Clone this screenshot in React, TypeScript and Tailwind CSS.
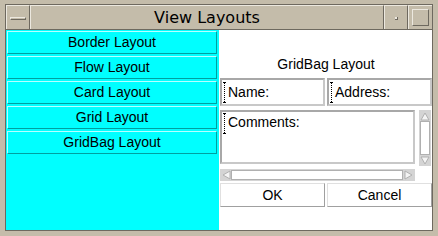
import React from 'react'

const sans = { fontFamily: '"Liberation Sans", Arial, sans-serif' }

function Cursor() {
  return (
    <span className="inline-flex flex-col items-center w-[3px] h-[21px] mr-[2px]">
      <span className="w-[3px] h-px bg-black" />
      <span className="flex-1 border-l border-dotted border-black" />
      <span className="w-[3px] h-px bg-black" />
    </span>
  )
}

function Field({ label }: { label: string }) {
  return (
    <div className="flex-1 h-[28px] border-2 border-t-[#a8a8a8] border-l-[#a8a8a8] border-b-[#c8c8c8] border-r-[#c8c8c8] flex items-center pl-px">
      <Cursor />
      <span className="text-[14px] leading-none text-black">{label}</span>
    </div>
  )
}

function Arrow({ dir }: { dir: 'up' | 'down' | 'left' | 'right' }) {
  const pts = {
    up: '1,9 5,2 9,9',
    down: '1,1 5,8 9,1',
    left: '9,1 2,5 9,9',
    right: '1,1 8,5 1,9',
  }[dir]
  return (
    <svg width="10" height="10" viewBox="0 0 10 10">
      <polygon points={pts} fill="#f4f4f4" stroke="#b0b0b0" strokeWidth="1" />
    </svg>
  )
}

const LAYOUTS = ['Border Layout', 'Flow Layout', 'Card Layout', 'Grid Layout', 'GridBag Layout']

export default function App() {
  return (
    <div className="w-[438px] h-[236px] bg-[#c4bcaa] pt-[4px] px-[5px] pb-[5px]" style={sans}>
      <div className="h-full flex flex-col border border-t-[#6e695f] border-l-[#6e695f] border-r-[#6e695f] border-b-[#6e695f]">
        {/* Title bar */}
        <div className="h-[25px] flex border-b border-[#6e695f]">
          <div className="w-[24px] border-t border-l border-[#ece8df] border-r-[#6e695f] border-r flex items-center justify-center">
            <div className="w-[16px] h-[3px] border-t border-l border-[#ece8df] border-b border-r border-b-[#6e695f] border-r-[#6e695f] mt-px" />
          </div>
          <div
            className="flex-1 border-t border-l border-[#ece8df] border-r border-r-[#6e695f] flex items-center justify-center text-[16px] text-black"
            style={{ fontFamily: '"DejaVu Sans", sans-serif' }}
          >
            View Layouts
          </div>
          <div className="w-[24px] border-t border-l border-[#ece8df] border-r border-r-[#6e695f] flex items-center justify-center">
            <div className="w-[3px] h-[3px] bg-[#ece8df] border-b border-r border-[#6e695f] mt-px" />
          </div>
          <div className="w-[24px] border-t border-l border-[#ece8df] flex items-center justify-center">
            <div className="w-[17px] h-[17px] border border-t-[#ece8df] border-l-[#ece8df] border-b-[#6e695f] border-r-[#6e695f]" />
          </div>
        </div>

        {/* Content */}
        <div className="flex-1 flex">
          <div className="w-[213px] bg-[#00ffff] pl-px pr-[2px] pt-px flex flex-col gap-[2px]">
            {LAYOUTS.map((l) => (
              <div
                key={l}
                className="h-[23px] border border-t-[#b8ffff] border-l-[#b8ffff] border-b-[#00a0a0] border-r-[#00a0a0] flex items-center justify-center text-[14px] text-black"
              >
                {l}
              </div>
            ))}
          </div>

          <div className="flex-1 bg-white pl-px flex flex-col">
            <div className="h-[48px] flex items-end justify-center pb-[7px] text-[14px] leading-none text-black">
              GridBag Layout
            </div>
            <div className="flex gap-[2px]">
              <Field label="Name:" />
              <Field label="Address:" />
            </div>
            <div className="flex mt-[4px] gap-[4px]">
              <div className="flex flex-col w-[195px]">
                <div className="h-[54px] border-2 border-t-[#a8a8a8] border-l-[#a8a8a8] border-b-[#c8c8c8] border-r-[#c8c8c8] flex items-start pl-px pt-px">
                  <Cursor />
                  <span className="text-[14px] leading-[18px] text-black">Comments:</span>
                </div>
                <div className="h-[12px] mt-[5px] bg-[#d4d4d4] flex items-center">
                  <div className="w-[11px] h-[12px] flex items-center justify-center">
                    <Arrow dir="left" />
                  </div>
                  <div className="flex-1 h-[10px] bg-white border border-[#b0b0b0]" />
                  <div className="w-[12px] h-[12px] flex items-center justify-center">
                    <Arrow dir="right" />
                  </div>
                </div>
              </div>
              <div className="w-[12px] h-[56px] bg-[#d4d4d4] flex flex-col items-center">
                <div className="h-[11px] flex items-center justify-center">
                  <Arrow dir="up" />
                </div>
                <div className="flex-1 w-[10px] bg-white border border-[#b0b0b0]" />
                <div className="h-[11px] flex items-center justify-center">
                  <Arrow dir="down" />
                </div>
              </div>
            </div>
            <div className="flex gap-[2px] mt-[2px]">
              <div className="flex-1 h-[24px] border border-t-[#e0e0e0] border-l-[#e0e0e0] border-b-[#a0a0a0] border-r-[#a0a0a0] flex items-center justify-center text-[14px] text-black">
                OK
              </div>
              <div className="flex-1 h-[24px] border border-t-[#e0e0e0] border-l-[#e0e0e0] border-b-[#a0a0a0] border-r-[#a0a0a0] flex items-center justify-center text-[14px] text-black">
                Cancel
              </div>
            </div>
          </div>
        </div>
      </div>
    </div>
  )
}
